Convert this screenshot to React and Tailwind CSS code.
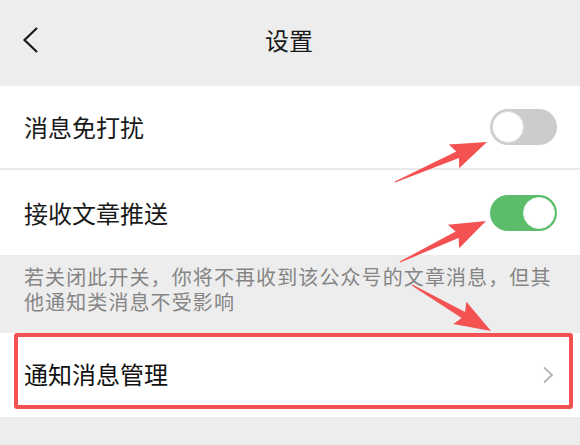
import React from "react";

function arrowPoints(tx, ty, px, py, h = 32, w = 13, s = 3.5, t = 0.6) {
  const dx = px - tx;
  const dy = py - ty;
  const L = Math.hypot(dx, dy);
  const ux = dx / L;
  const uy = dy / L;
  const nx = -uy;
  const ny = ux;
  const bx = px - ux * h;
  const by = py - uy * h;
  const wx = px - ux * (h + 4);
  const wy = py - uy * (h + 4);
  const pts = [
    [tx + nx * t, ty + ny * t],
    [bx + nx * s, by + ny * s],
    [wx + nx * w, wy + ny * w],
    [px, py],
    [wx - nx * w, wy - ny * w],
    [bx - nx * s, by - ny * s],
    [tx - nx * t, ty - ny * t],
  ];
  return pts.map((p) => p[0].toFixed(1) + "," + p[1].toFixed(1)).join(" ");
}

function Toggle({ on }) {
  return (
    <div
      className={
        "w-[67px] h-[36px] rounded-full flex items-center px-[2px] " +
        (on ? "bg-[#5bbd6a] justify-end" : "bg-[#cccccc] justify-start")
      }
    >
      <div
        className={
          "w-[32px] h-[32px] rounded-full bg-white " +
          (on ? "border border-[#e8f5ea]" : "border border-[#dedede]")
        }
      />
    </div>
  );
}

export default function App() {
  const font = { fontFamily: '"Noto Sans CJK SC", "Noto Sans", sans-serif' };
  return (
    <div
      className="relative w-[580px] h-[445px] bg-[#ededed] overflow-hidden"
      style={font}
    >
      <div className="h-[86px] grid grid-cols-[1fr_auto_1fr] items-center pb-[6px]">
        <div className="pl-[22px] flex items-center">
          <svg width="18" height="28" viewBox="0 0 18 28">
            <path
              d="M15 2 L2.5 14 L15 26"
              fill="none"
              stroke="#1a1a1a"
              strokeWidth="2.2"
            />
          </svg>
        </div>
        <div className="text-[24px] leading-none text-[#1a1a1a] pr-[2px]">设置</div>
        <div />
      </div>

      <div className="bg-white">
        <div className="h-[82px] flex items-center justify-between pl-[24px] pr-[23px]">
          <span className="text-[24px] text-[#1a1a1a] leading-none">消息免打扰</span>
          <Toggle on={false} />
        </div>
        <div className="h-[2px] bg-[#e9e9e9]" />
        <div className="h-[85px] flex items-center justify-between pl-[24px] pr-[23px]">
          <span className="text-[24px] text-[#1a1a1a] leading-none">接收文章推送</span>
          <Toggle on={true} />
        </div>
      </div>

      <div className="h-[78px] pl-[24px] pt-[11px] flex flex-col gap-[3px] text-[20px] leading-none tracking-[1.1px] text-[#858585] whitespace-nowrap">
        <div className="h-[22px] flex items-center">若关闭此开关，你将不再收到该公众号的文章消息，但其</div>
        <div className="h-[22px] flex items-center">他通知类消息不受影响</div>
      </div>

      <div className="relative bg-white h-[84px] flex items-center justify-between pl-[24px] pr-[26px]">
        <span className="text-[24px] text-[#111111] leading-none pb-[2px]">通知消息管理</span>
        <svg width="12" height="18" viewBox="0 0 12 18">
          <path d="M2 1.5 L10 9 L2 16.5" fill="none" stroke="#b3b3b3" strokeWidth="1.8" />
        </svg>
        <div className="absolute left-[14px] top-0 w-[559px] h-[76px] border-[4px] border-[#f45252] rounded-[3px]" />
      </div>

      <svg
        className="absolute left-0 top-0 pointer-events-none"
        width="580"
        height="445"
        viewBox="0 0 580 445"
      >
        <polygon points={arrowPoints(395, 182, 487, 142)} fill="#f45252" />
        <polygon points={arrowPoints(400, 262, 486, 221)} fill="#f45252" />
        <polygon points={arrowPoints(412, 285, 491, 331)} fill="#f45252" />
      </svg>
    </div>
  );
}
